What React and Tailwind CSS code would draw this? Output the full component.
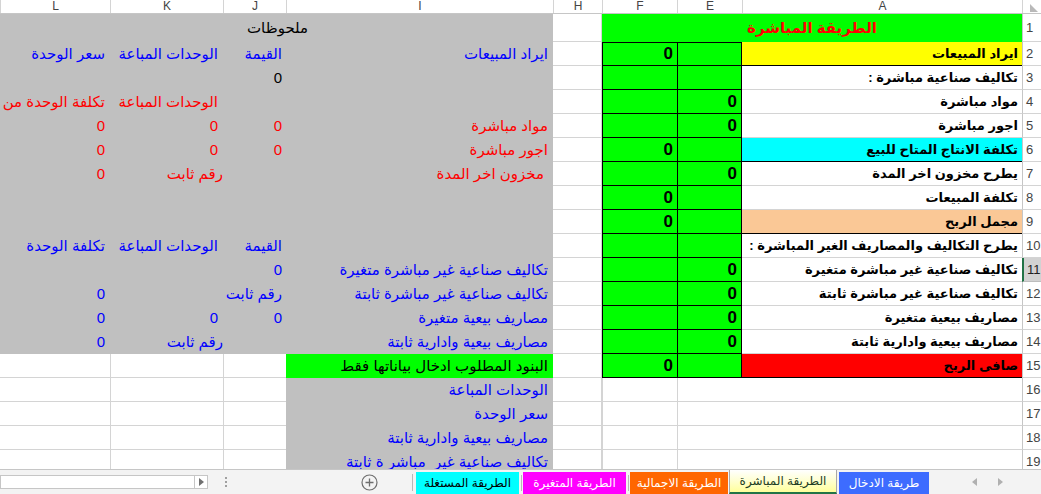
const GRID = 'border-[#d4d4d4]'
const BLUE = 'text-[#0000ff]'
const RED = 'text-[#ff0000]'

const HEAD = [
  { k: 'R', w: 'w-[19px]' },
  { k: 'A', w: 'w-[280px]' },
  { k: 'E', w: 'w-[65px]' },
  { k: 'F', w: 'w-[75px]' },
  { k: 'H', w: 'w-[49px]' },
  { k: 'I', w: 'w-[267px]' },
  { k: 'J', w: 'w-[63px]' },
  { k: 'K', w: 'w-[113px]' },
  { k: 'L', w: 'w-[110px]' },
]

const ROWS = [
  { n: 2, a: 'ايراد المبيعات', aBg: 'bg-[#ffff00]', f: '0', i: 'ايراد المبيعات', j: 'القيمة', k: 'الوحدات المباعة', l: 'سعر الوحدة', c: BLUE },
  { n: 3, a: 'تكاليف صناعية مباشرة :', j: '0', c: 'text-black' },
  { n: 4, a: 'مواد مباشرة', e: '0', k: 'الوحدات المباعة', l: 'تكلفة الوحدة من', c: RED },
  { n: 5, a: 'اجور مباشرة', e: '0', i: 'مواد مباشرة', j: '0', k: '0', l: '0', c: RED },
  { n: 6, a: 'تكلفة الانتاج المتاح للبيع', aBg: 'bg-[#00ffff]', f: '0', i: 'اجور مباشرة', j: '0', k: '0', l: '0', c: RED },
  { n: 7, a: 'يطرح مخزون اخر المدة', e: '0', i: 'مخزون اخر المدة', iPad: true, k: 'رقم ثابت', l: '0', c: RED },
  { n: 8, a: 'تكلفة المبيعات', f: '0' },
  { n: 9, a: 'مجمل الربح', aBg: 'bg-[#fac896]', f: '0' },
  { n: 10, a: 'يطرح التكاليف والمصاريف الغير المباشرة :', j: 'القيمة', k: 'الوحدات المباعة', l: 'تكلفة الوحدة', c: BLUE },
  { n: 11, a: 'تكاليف صناعية غير مباشرة متغيرة', e: '0', i: 'تكاليف صناعية غير مباشرة متغيرة', j: '0', c: BLUE },
  { n: 12, a: 'تكاليف صناعية غير مباشرة ثابتة', e: '0', i: 'تكاليف صناعية غير مباشرة ثابتة', j: 'رقم ثابت', l: '0', c: BLUE },
  { n: 13, a: 'مصاريف بيعية متغيرة', e: '0', i: 'مصاريف بيعية متغيرة', j: '0', k: '0', l: '0', c: BLUE },
  { n: 14, a: 'مصاريف بيعية وادارية ثابتة', e: '0', i: 'مصاريف بيعية وادارية ثابتة', k: 'رقم ثابت', l: '0', c: BLUE },
  { n: 15, a: 'صافى الربح', aBg: 'bg-[#ff0000]', f: '0', i: 'البنود المطلوب ادخال بياناتها فقط', c: 'text-black', open: true },
  { n: 16, i: 'الوحدات المباعة', c: BLUE, open: true },
  { n: 17, i: 'سعر الوحدة', c: BLUE, open: true },
  { n: 18, i: 'مصاريف بيعية وادارية ثابتة', c: BLUE, open: true },
  { n: 19, i: 'تكاليف صناعية غير  مباشر ة ثابتة', c: BLUE, open: true },
]

function Txt({ children, cls = '' }) {
  return <span className={`relative z-10 whitespace-pre ${cls}`}>{children}</span>
}

function RowNum({ n, h }) {
  const sel = n === 11
  return (
    <div
      className={`w-[19px] ${h} shrink-0 overflow-hidden flex items-center pl-[3px] border-b text-[13px] ${
        sel ? 'bg-[#d2d2d2] border-[#bdbdbd] text-[#1f1f1f] border-l-2 border-l-[#217346]' : `bg-white ${GRID} border-l border-l-[#c6c6c6] text-[#444]`
      }`}
      dir="ltr"
    >
      {n}
    </div>
  )
}

function SheetRow({ r }) {
  const boxed = r.n <= 15
  const aBg = r.aBg || 'bg-white'
  const aBorder = r.aBg ? r.aBg.replace('bg-', 'border-b-') : 'border-b-[#d4d4d4]'
  const gray = 'bg-[#c0c0c0]'
  const iBg = r.n === 15 ? 'bg-[#00ff00]' : gray
  const side = r.open ? `bg-white border-b border-l ${GRID}` : gray
  return (
    <div className="flex h-[24px]">
      <RowNum n={r.n} h="h-[24px]" />
      <div className={`w-[280px] shrink-0 ${aBg} border-b ${aBorder} flex items-center pr-[4px] text-[13px] font-bold text-black`}>
        {r.a && <Txt>{r.a}</Txt>}
      </div>
      <div
        className={`w-[65px] shrink-0 flex items-center pr-[4px] text-[17px] font-bold ${
          boxed ? `bg-[#00ff00] border-b border-l border-r border-black ${r.n === 2 ? 'border-t' : ''}` : `bg-white border-b border-l ${GRID}`
        }`}
      >
        {r.e}
      </div>
      <div
        className={`w-[75px] shrink-0 flex items-center pr-[4px] text-[17px] font-bold ${
          boxed ? `bg-[#00ff00] border-b border-l border-black ${r.n === 2 ? 'border-t' : ''}` : `bg-white border-b border-l ${GRID}`
        }`}
      >
        {r.f}
      </div>
      <div className={`w-[49px] shrink-0 bg-white border-b border-r ${GRID}`} />
      <div className={`w-[267px] shrink-0 ${iBg} flex items-center ${r.iPad ? 'pr-[9px]' : 'pr-[5px]'} text-[15px] ${r.c}`}>
        {r.i && <Txt>{r.i}</Txt>}
      </div>
      <div className={`w-[63px] shrink-0 ${side} flex items-center pr-[4px] text-[15px] ${r.c}`}>
        {!r.open && r.j && <Txt>{r.j}</Txt>}
      </div>
      <div className={`w-[113px] shrink-0 ${side} flex items-center ${r.k === 'رقم ثابت' ? 'pr-0' : 'pr-[5px]'} text-[15px] ${r.c}`}>
        {!r.open && r.k && <Txt>{r.k}</Txt>}
      </div>
      <div className={`w-[110px] shrink-0 ${r.open ? `bg-white border-b ${GRID}` : gray} flex items-center pr-[5px] text-[15px] ${r.c}`}>
        {!r.open && r.l && <Txt>{r.l}</Txt>}
      </div>
    </div>
  )
}

function TabBar() {
  return (
    <div className="h-[25px] flex items-stretch bg-[#f3f3f3] border-t border-[#c6c6c6] text-[12px]" dir="ltr">
      <div className="self-center w-[208px] h-[14px] bg-white border border-[#c6c6c6] flex justify-end">
        <div className="w-[13px] h-full border-l border-[#c6c6c6] flex items-center justify-center">
          <svg width="5" height="8" viewBox="0 0 5 8"><path d="M0 0 L5 4 L0 8 Z" fill="#707070" /></svg>
        </div>
      </div>
      <div className="self-center ml-[17px] flex flex-col gap-[2px]">
        <span className="w-[2px] h-[2px] bg-[#a0a0a0]" />
        <span className="w-[2px] h-[2px] bg-[#a0a0a0]" />
        <span className="w-[2px] h-[2px] bg-[#a0a0a0]" />
      </div>
      <div className="self-center ml-[134px]">
        <svg width="17" height="17" viewBox="0 0 17 17">
          <circle cx="8.5" cy="8.5" r="7.5" fill="none" stroke="#6e6e6e" strokeWidth="1.2" />
          <path d="M8.5 4.5 V12.5 M4.5 8.5 H12.5" stroke="#6e6e6e" strokeWidth="1.3" />
        </svg>
      </div>
      <div className="self-center ml-[34px] w-px h-[17px] bg-[#b8b8b8]" />
      <div className="ml-[3px] mt-[2px] flex items-stretch h-[22px]">
        <div className="w-[103px] bg-[#00ffff] text-black flex items-center justify-center">الطريقة المستغلة</div>
        <div className="w-[4px] flex items-center justify-center"><span className="w-px h-[16px] bg-[#b8b8b8]" /></div>
        <div className="w-[103px] bg-[#ff00ff] text-white flex items-center justify-center">الطريقة المتغيرة</div>
        <div className="w-[4px] flex items-center justify-center"><span className="w-px h-[16px] bg-[#b8b8b8]" /></div>
        <div className="w-[98px] bg-[#ff6600] text-white flex items-center justify-center">الطريقة الاجمالية</div>
        <div className="w-[108px] ml-[1px] bg-gradient-to-b from-white to-[#ffff99] text-[#1e3d24] border-x border-[#a8a8a8] border-b-2 border-b-[#217346] flex items-center justify-center -mt-[2px] h-[24px]">
          الطريقة المباشرة
        </div>
        <div className="w-[90px] ml-[2px] bg-[#3d6cff] text-white flex items-center justify-center">طريقة الادخال</div>
      </div>
      <div className="self-center ml-[43px] flex items-center gap-[21px]">
        <svg width="5" height="8" viewBox="0 0 5 8"><path d="M5 0 L0 4 L5 8 Z" fill="#b0b0b0" /></svg>
        <svg width="5" height="8" viewBox="0 0 5 8"><path d="M0 0 L5 4 L0 8 Z" fill="#b0b0b0" /></svg>
      </div>
    </div>
  )
}

export default function App() {
  return (
    <div className="w-[1041px] h-[494px] overflow-hidden bg-white font-['Liberation_Sans','DejaVu_Sans',sans-serif] select-none">
      <div className="h-[469px] overflow-hidden" dir="rtl">
        {/* column letters */}
        <div className="flex h-[14px] border-b border-[#c6c6c6] bg-white text-[12px] leading-[13px] text-[#444]">
          {HEAD.map(c => (
            <div key={c.k} className={`${c.w} shrink-0 flex items-center justify-center border-l ${GRID}`}>
              {c.k === 'R' ? (
                <svg width="10" height="10" viewBox="0 0 10 10" className="ml-[4px] mt-[2px]"><path d="M1 1 L1 9 L9 9 Z" fill="#b9b9b9" /></svg>
              ) : (
                c.k
              )}
            </div>
          ))}
        </div>

        {/* row 1 */}
        <div className="flex h-[28px]">
          <RowNum n={1} h="h-[28px]" />
          <div className="w-[420px] shrink-0 bg-[#00ff00] flex items-center justify-center text-[15px] font-bold text-[#ff0000]">
            الطريقة المباشرة
          </div>
          <div className={`w-[49px] shrink-0 bg-white border-b border-r ${GRID}`} />
          <div className="w-[267px] shrink-0 bg-[#c0c0c0]" />
          <div className="w-[63px] shrink-0 bg-[#c0c0c0] flex items-center pl-[24px] text-[15px] text-black" dir="ltr">
            <Txt>ملحوظات</Txt>
          </div>
          <div className="w-[113px] shrink-0 bg-[#c0c0c0]" />
          <div className="w-[110px] shrink-0 bg-[#c0c0c0]" />
        </div>

        {ROWS.map(r => (
          <SheetRow key={r.n} r={r} />
        ))}
      </div>
      <TabBar />
    </div>
  )
}
